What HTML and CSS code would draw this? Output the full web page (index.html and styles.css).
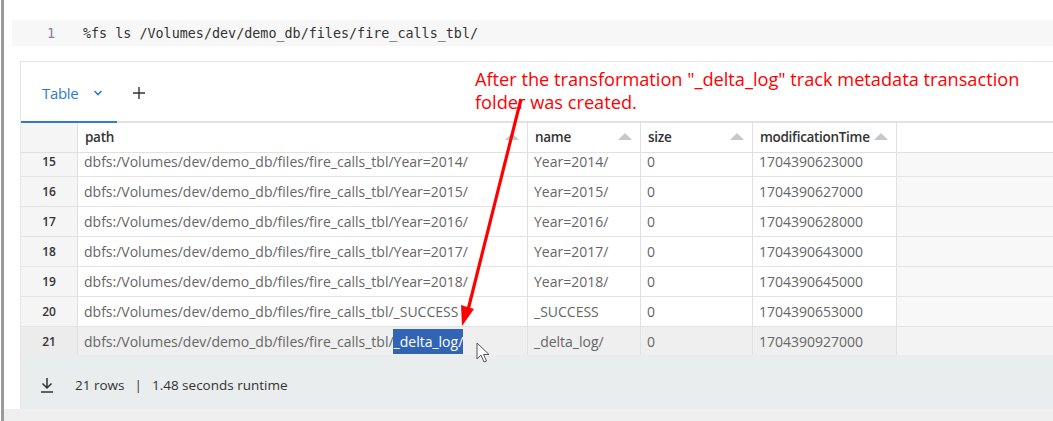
FILE: index.html
```html
<!DOCTYPE html>
<html>
<head>
<meta charset="utf-8">
<link rel="stylesheet" href="styles.css">
</head>
<body>
<div class="page">
  <div class="edge"></div>
  <div class="main">
    <div class="code">
      <span class="ln">1</span>
      <span class="src">%fs ls /Volumes/dev/demo_db/files/fire_calls_tbl/</span>
    </div>
    <div class="panel">
      <div class="tabs">
        <div class="tab active">
          <span>Table</span>
          <svg class="chev" width="10" height="6" viewBox="0 0 10 6"><path d="M1.5 1 L5 4.5 L8.5 1" fill="none" stroke="#2f7ccb" stroke-width="1.6"/></svg>
        </div>
        <div class="plus">
          <svg width="14" height="14" viewBox="0 0 14 14"><path d="M7 1 V13 M1 7 H13" stroke="#333" stroke-width="1.4"/></svg>
        </div>
      </div>
      <div class="grid">
        <div class="hrow">
          <div class="c num"></div>
          <div class="c h">path<i class="sort"></i></div>
          <div class="c h">name<i class="sort"></i></div>
          <div class="c h">size<i class="sort"></i></div>
          <div class="c h">modificationTime<i class="sort"></i></div>
          <div class="c fill"></div>
        </div>
        <div class="body">
          <div class="scroll">
            <div class="row"><div class="c num">15</div><div class="c">dbfs:/Volumes/dev/demo_db/files/fire_calls_tbl/Year=2014/</div><div class="c">Year=2014/</div><div class="c">0</div><div class="c">1704390623000</div><div class="c fill"></div></div>
            <div class="row"><div class="c num">16</div><div class="c">dbfs:/Volumes/dev/demo_db/files/fire_calls_tbl/Year=2015/</div><div class="c">Year=2015/</div><div class="c">0</div><div class="c">1704390627000</div><div class="c fill"></div></div>
            <div class="row"><div class="c num">17</div><div class="c">dbfs:/Volumes/dev/demo_db/files/fire_calls_tbl/Year=2016/</div><div class="c">Year=2016/</div><div class="c">0</div><div class="c">1704390628000</div><div class="c fill"></div></div>
            <div class="row"><div class="c num">18</div><div class="c">dbfs:/Volumes/dev/demo_db/files/fire_calls_tbl/Year=2017/</div><div class="c">Year=2017/</div><div class="c">0</div><div class="c">1704390643000</div><div class="c fill"></div></div>
            <div class="row"><div class="c num">19</div><div class="c">dbfs:/Volumes/dev/demo_db/files/fire_calls_tbl/Year=2018/</div><div class="c">Year=2018/</div><div class="c">0</div><div class="c">1704390645000</div><div class="c fill"></div></div>
            <div class="row"><div class="c num">20</div><div class="c">dbfs:/Volumes/dev/demo_db/files/fire_calls_tbl/_SUCCESS</div><div class="c">_SUCCESS</div><div class="c">0</div><div class="c">1704390653000</div><div class="c fill"></div></div>
            <div class="row hover"><div class="c num">21</div><div class="c">dbfs:/Volumes/dev/demo_db/files/fire_calls_tbl/<span class="sel">_delta_log/</span></div><div class="c">_delta_log/</div><div class="c">0</div><div class="c">1704390927000</div><div class="c fill"></div></div>
          </div>
        </div>
      </div>
      <div class="footer">
        <svg class="dl" width="14" height="16" viewBox="0 0 14 16"><path d="M7 1 V11 M2.5 6.5 L7 11 L11.5 6.5 M1 15 H13" fill="none" stroke="#333" stroke-width="1.5"/></svg>
        <span>21 rows</span>
        <span class="bar">|</span>
        <span>1.48 seconds runtime</span>
      </div>
    </div>
    <div class="bottom"></div>
  </div>
</div>
<div class="note">After the transformation "_delta_log" track metadata transaction<br>folder was created.</div>
<svg class="arrow" width="1053" height="421" viewBox="0 0 1053 421">
  <path d="M521 99 L468 310" stroke="#f00" stroke-width="3.2" fill="none"/>
  <path d="M462 326 L461 305 L474 309 Z" fill="#f00"/>
</svg>
<svg class="cursor" width="16" height="22" viewBox="0 0 16 22">
  <path d="M1 1 L1 17 L5 13 L8 20 L10.5 19 L7.5 12.5 L13 12.5 Z" fill="#fff" stroke="#555" stroke-width="1"/>
</svg>
</body>
</html>
```
FILE: styles.css
```css
html, body {
  margin: 0;
  padding: 0;
  background: #fff;
  width: 1053px;
  height: 421px;
  overflow: hidden;
  position: relative;
}
body {
  font-family: "Open Sans", "Noto Sans", sans-serif;
  color: #555;
}
.page {
  display: flex;
  height: 421px;
}
.edge {
  width: 3px;
  margin-left: 1px;
  background: #9a9a9a;
  flex: none;
}
.main {
  flex: 1;
  display: flex;
  flex-direction: column;
  min-width: 0;
}
.code {
  margin-top: 20px;
  margin-left: 8px;
  height: 26px;
  background: #f7f7f7;
  display: flex;
  align-items: center;
  font-family: "DejaVu Sans Mono", monospace;
  font-size: 13.4px;
  color: #333;
}
.ln {
  width: 43px;
  text-align: right;
  color: #8a7cae;
  padding-right: 28px;
  flex: none;
}
.src { white-space: pre; }
.panel {
  margin-top: 15px;
  margin-left: 16px;
  border-top: 1px solid #e6e6e6;
  border-left: 1px solid #e6e6e6;
  display: flex;
  flex-direction: column;
}
.tabs {
  height: 59px;
  display: flex;
  align-items: stretch;
  border-bottom: 2px solid #e2e2e2;
}
.tab {
  width: 96px;
  display: flex;
  align-items: center;
  gap: 15px;
  padding-left: 21px;
  padding-top: 2px;
  box-sizing: border-box;
  color: #2f7ccb;
  font-size: 15px;
  margin-bottom: -2px;
}
.tab.active { border-bottom: 2px solid #2f7ccb; }
.tab span { letter-spacing: -0.3px; }
.plus {
  display: flex;
  align-items: center;
  padding-left: 15px;
  padding-top: 2px;
}
.grid { display: flex; flex-direction: column; }
.hrow, .row {
  display: grid;
  grid-template-columns: 57px 450px 113px 112px 144px 1fr;
  box-sizing: border-box;
}
.hrow { height: 30px; background: #fff; border-bottom: 1px solid #e0e0e0; }
.c {
  border-right: 1px solid #e0e0e0;
  display: flex;
  align-items: center;
  padding-left: 6px;
  font-size: 14px;
  white-space: nowrap;
  color: #666;
  position: relative;
}
.c.num {
  background: #f5f5f5;
  justify-content: center;
  padding-left: 0;
  font-size: 12px;
  font-weight: 600;
  color: #333;
}
.c.h {
  color: #333;
  font-weight: 600;
  font-size: 13.5px;
  letter-spacing: -0.3px;
  padding-left: 7px;
  padding-bottom: 2px;
}
.sort {
  position: absolute;
  right: 8px;
  top: 10px;
  width: 0;
  height: 0;
  border-left: 7px solid transparent;
  border-right: 7px solid transparent;
  border-bottom: 7px solid #c8c8c8;
}
.c.fill { border-right: none; background: #fff; }
.body {
  height: 202px;
  overflow: hidden;
  background: #f8f8f8;
}
.scroll { margin-top: -6px; }
.row {
  height: 30px;
  border-bottom: 1px solid #e4e4e4;
  background: #fff;
}
.row .c.fill { background: #f8f8f8; }
.row.hover { background: #efefef; border-bottom-color: #dcdcdc; }
.row.hover .c.num { background: #ececec; }
.row.hover .c.fill { background: #f3f3f3; }
.sel {
  background: #3264b6;
  color: #fff;
  padding: 3px 0 3px 1px;
  margin-left: -1px;
}
.footer {
  height: 54px;
  background: #e9eded;
  display: flex;
  align-items: center;
  font-size: 13.5px;
  color: #333;
  padding-left: 19px;
  padding-top: 6px;
  box-sizing: border-box;
}
.dl { margin-right: 21px; }
.bar { margin: 0 10px; }
.bottom {
  flex: 1;
  background: #efefef;
}
.note {
  position: absolute;
  left: 475px;
  top: 68px;
  color: #f00;
  font-family: "Open Sans", sans-serif;
  font-size: 18.2px;
  line-height: 23px;
  white-space: nowrap;
}
.arrow { position: absolute; left: 0; top: 0; pointer-events: none; }
.cursor { position: absolute; left: 476px; top: 342px; }
```
